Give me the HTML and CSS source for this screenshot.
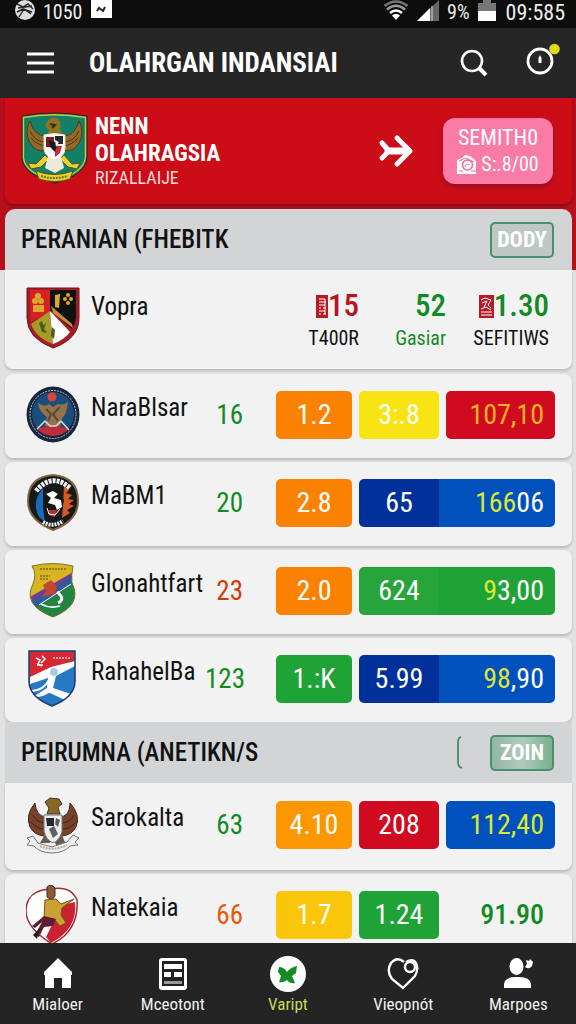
FILE: index.html
```html
<!DOCTYPE html>
<html lang="id">
<head>
<meta charset="utf-8">
<meta name="viewport" content="width=device-width, initial-scale=1">
<title>OLAHRGAN INDANSIAI</title>
<link rel="stylesheet" href="styles.css">
</head>
<body>
<div class="status">
  <svg width="20" height="21" viewBox="0 0 20 21"><circle cx="10" cy="10" r="10" fill="#ddd"/><path d="M2 4l6 3 5-3 5 5M2 12l6-3 9 3M3 8l14-2M4 17l5-8 7 5" stroke="#222" stroke-width="1.4" fill="none"/></svg>
  <span class="status-num">1050</span>
  <svg width="21" height="18" viewBox="0 0 21 18"><path d="M0 0h21v18H0z" fill="#fff"/><path d="M6 11l2-3 4 3 2-4" stroke="#222" stroke-width="2" fill="none"/></svg>
  <span class="spacer"></span>
  <svg width="26" height="21" viewBox="0 0 26 21" fill="none" stroke-width="2.6"><path d="M1.500 6Q13-3 24.500 6" stroke="#777"/><path d="M4 9.500Q13 2 22 9.500" stroke="#999"/><path d="M7 13Q13 8 19 13" stroke="#fff"/><path d="M9 15.500Q13 12 17 15.500L13 20z" fill="#fff" stroke="none"/></svg>
  <svg width="22" height="21" viewBox="0 0 22 21"><path d="M0 21L22 0v21z" fill="#666"/><path d="M0 21L13 8v13z" fill="#fff"/><path d="M15 6v15" stroke="#ddd"/></svg>
  <span class="status-num">9%</span>
  <svg class="battery" width="18" height="21" viewBox="0 0 18 21"><path d="M5 0h8v3h5v8H0V3h5z" fill="#777"/><path d="M0 11h18v10H0z" fill="#fff"/></svg>
  <span class="status-time">09:585</span>
</div>
<header class="appbar">
  <button class="icon-btn" aria-label="Menu"><svg width="27" height="22" viewBox="0 0 27 22" stroke="#fff" stroke-width="3"><path d="M0 2h27M0 11h27M0 20h27"/></svg></button>
  <h1 class="title">OLAHRGAN INDANSIAI</h1>
  <button class="icon-btn" aria-label="Cari"><svg width="28" height="28" viewBox="0 0 28 28" fill="none" stroke="#fff"><circle cx="12" cy="12" r="10" stroke-width="2.600"/><path d="M19 19l7 7" stroke-width="4"/></svg></button>
  <button class="icon-btn" aria-label="Waktu"><svg width="34" height="32" viewBox="0 0 34 32"><circle cx="14" cy="18" r="12" fill="none" stroke="#fff" stroke-width="2.800"/><path d="M12.500 20v-5l1.500-3 1.500 3v5z" fill="#fff"/><circle cx="28.500" cy="6" r="5.300" fill="#dfdc12"/></svg></button>
</header>
<main class="content">
  <section class="banner">
    <svg class="banner-crest" width="67" height="72" viewBox="0 0 67 72">
      <path d="M1 4Q33-2 66 4V45Q65 63 34 71 3 63 1 47z" fill="#128066" stroke="#222" stroke-width="1"/>
      <path d="M2.500 5.500Q33 0 64.500 5.500V45Q63 61 34 69 4 61 2.500 46z" fill="none" stroke="#d9bf36" stroke-width="1.400"/>
      <path d="M9 9Q3 20 9 31q6 10 16 7v-14Q13 24 9 9zM58 9q6 11 0 22-6 10-16 7V24Q54 24 58 9z" fill="#946928" stroke="#553b17"/>
      <path d="M9 19q5 11 16 11M10 26q6 7 15 8M58 19q-5 11-16 11M57 26q-6 7-15 8" stroke="#4b3617" fill="none"/>
      <path d="M26 10q3-6 9-4 6 2 4 11l4 9H24l4-8-4-4z" fill="#8d7525"/><path d="M29 12l5 1-3 3" fill="none" stroke="#362e14" stroke-width="2"/>
      <path d="M24 43l-9 9-8-1 3 6 10-2 8-8zM43 43l8 9 8-1-3 6-9-2-8-8z" fill="#e6d229" stroke="#54521c"/>
      <path d="M27 44h13l3 12-9 5-10-5z" fill="#ece9d7"/>
      <path d="M23 23Q33 20 44 23v13q0 9-10.500 12Q23 44 23 36z" fill="#fff" stroke="#eadfce"/>
      <path d="M25 25h8v10h-8z" fill="#821b20"/><path d="M34 24h8v8h-8z" fill="#25272a"/><path d="M25 36h8l1 8-8-4z" fill="#f7f7f7"/><path d="M34 34h7l-2 7-5 4z" fill="#c52e33"/><path d="M28 28l9 3-3 9-5-5z" fill="#171a20"/><path d="M34 28l4 2-3 5z" fill="#fff"/>
      <path d="M15 59q18 7 37 0l-3 8q-15 5-31 0z" fill="#e6d229" stroke="#54521c"/><path d="M20 64q13 4 27 0" stroke="#77701f" stroke-width="2" stroke-dasharray="2 1" fill="none"/>
    </svg>
    <div class="banner-text"><h2>NENN<br>OLAHRAGSIA</h2><p>RIZALLAIJE</p></div>
    <svg class="banner-arrow" width="36" height="34" viewBox="0 0 36 34" fill="none" stroke="#fff" stroke-linecap="round" stroke-linejoin="round"><path d="M10 17h20" stroke-width="7"/><path d="M19 4l13 13-13 13" stroke-width="5"/><path d="M4 9l7 8-7 7" stroke-width="5"/></svg>
    <button class="banner-btn"><span>SEMITH0</span><span class="btn-line"><svg width="20" height="21" viewBox="0 0 20 21"><path d="M0 20V6l5-2 3-3 5 1 6 5v13z" fill="#fff"/><circle cx="10.500" cy="11" r="5" fill="none" stroke="#ee6d99" stroke-width="1.600"/><path d="M2 7l7-3 8 4M8 13q1-5 5-2M2 17h4M14 17h5" stroke="#ee6d99" fill="none"/></svg>S:.8/00</span></button>
  </section>

  <section class="group">
    <div class="group-head"><h2>PERANIAN (FHEBITK</h2><button class="tag">DODY</button></div>
    <table class="list"><tbody>
      <tr class="row summary">
        <td class="crest"><svg width="54" height="62" viewBox="0 0 54 62"><path d="M1 1h52v30Q53 52 27 61 1 51 1 31z" fill="#a71c25" stroke="#6d1920"/><path d="M4 3h20v22L5 35z" fill="#d81f24"/><path d="M24 3h26v28q-1 6-4 11L24 23z" fill="#111"/><path d="M24 24L5 37q5 14 22 20z" fill="#a49c25"/><path d="M24 24l20 21q-6 8-17 12z" fill="#fff"/><path d="M25 19l21 18 1 4-20-15z" fill="#c78d3c"/><g fill="#d9a92b"><circle cx="12" cy="9" r="3"/><circle cx="9" cy="14" r="3"/><circle cx="15" cy="14" r="3"/><path d="M7 18h11v7H7z"/><circle cx="42" cy="8" r="2"/><circle cx="39" cy="12" r="2"/><circle cx="45" cy="12" r="2"/><circle cx="42" cy="16" r="2"/><path d="M29 8l5-1-1 14-4-1z"/></g><path d="M13 36l3-2 1 4 3-2-2 6 3 4-5-1zM26 40l3 3-1 9-3-3z" fill="#4f5a22"/></svg></td>
        <td class="name">Vopra</td>
        <td class="stat"><strong class="red"><svg width="12" height="23" viewBox="0 0 12 23"><path d="M0 0h12v23H0z" fill="#b71b25"/><path d="M3 4h6M3 7h7M3 10h6M3 13h2M7 13h3M3 16h6M3 19h2M7 19h3M9 4v15" stroke="#fff" fill="none"/></svg>15</strong><span>T400R</span></td>
        <td class="stat"><strong class="green">52</strong><span class="green">Gasiar</span></td>
        <td class="stat"><strong class="green"><svg width="15" height="23" viewBox="0 0 15 23"><path d="M0 0h15v23H0z" fill="#b71b25"/><path d="M2 5l4-2 6 2-3 5 3 3M3 8l5-2-3 6M2 14l5-2 5 3M2 17h11M2 20h11" stroke="#fff" fill="none"/></svg>1.30</strong><span>SEFITIWS</span></td>
      </tr>
      <tr class="row">
        <td class="crest"><svg width="54" height="57" viewBox="0 0 54 57"><ellipse cx="27" cy="28.500" rx="26.500" ry="28" fill="#17273b"/><ellipse cx="27" cy="28.500" rx="23" ry="24" fill="none" stroke="#bac2ca" stroke-dasharray="2 1"/><ellipse cx="27" cy="28" rx="21" ry="22" fill="#1a4c7d"/><circle cx="26" cy="11" r="4.500" fill="#d5453c"/><path d="M12 17q7 5 11 1l4 3 5-3q7 2 10-3-1 14-6 17l-2 8h-15l2-9q-8-5-9-14z" fill="#94734a"/><path d="M20 23l5 5-3 7M34 21l-7 7 5 7" stroke="#5a4632" fill="none" stroke-width="2"/><path d="M11 43q16-7 32 0-7 7-16 7t-16-7z" fill="#be2c3d"/><path d="M11 43l8-8 5 5h6l5-5 8 9" fill="none" stroke="#ddd" stroke-width="1.500"/></svg></td>
        <td class="name">NaraBlsar</td><td class="count green">16</td>
        <td class="pill orange">1.2</td><td class="pill yellow">3:.8</td><td class="pill total crimson amber-text">107,10</td>
      </tr>
      <tr class="row">
        <td class="crest"><svg width="54" height="57" viewBox="0 0 54 57"><path d="M27 1q25 2 25 26 0 20-25 29Q2 46 2 27 2 3 27 1z" fill="#171a1c" stroke="#80643c" stroke-width="2"/><path d="M17 14Q5 28 13 43l6 5-2-14z" fill="#176bb9"/><path d="M38 12l5 4-3 3 6 2-4 4 6 1-5 4 5 2-7 4 3 3-8 5 1-12z" fill="#d65a20"/><path d="M10 17q16-19 34-3" fill="none" stroke="#eee" stroke-width="5" stroke-dasharray="3 1"/><path d="M18 22l5-6 9 1 6 9-2 10-6 7-9-1-4-9z" fill="#151515"/><path d="M20 20l7-3 5 3-4 4 7 2 1 7-5 3-2-5-7-2 3-5z" fill="#fff"/><path d="M22 36h9l-2 7-5-1z" fill="#b92e32"/><path d="M21 34l2 6 6 1 5-6" stroke="#fff" fill="none"/><path d="M17 48q10 6 20-1" stroke="#eee" stroke-width="4" stroke-dasharray="2 1" fill="none"/></svg></td>
        <td class="name">MaBM1</td><td class="count green">20</td>
        <td class="pill orange">2.8</td><td class="pill navy join-left">65</td><td class="pill total blue join-right"><span class="lime-text">166</span>06</td>
      </tr>
      <tr class="row">
        <td class="crest"><svg width="54" height="57" viewBox="0 0 54 57"><defs><clipPath id="shield-c"><path d="M6 4q21-5 41 0-2 10-1 17 11 22-19 34Q-4 43 7 22 11 12 6 4z"/></clipPath></defs><g clip-path="url(#shield-c)"><path d="M0 0h54v57H0z" fill="#d7b421"/><path d="M4 35L49 9v15L13 48z" fill="#713d91"/><path d="M4 40L49 12v8L10 46z" fill="#315a9c"/><path d="M10 46L49 20v37H15z" fill="#218541"/><path d="M13 43l32-21" stroke="#fff"/><path d="M17 23l8-5 6 6-2 8-13 3 4-6z" fill="#c64534"/><path d="M31 30q9 7 1 11" fill="none" stroke="#fff" stroke-width="3"/><path d="M15 42q9 5 19 2" fill="none" stroke="#fff" stroke-width="1.500"/><path d="M14 7h26M14 14h10M14 17h9" stroke="#99791e" stroke-width="2" stroke-dasharray="2 1"/></g><path d="M6 4q21-5 41 0-2 10-1 17 11 22-19 34Q-4 43 7 22 11 12 6 4z" fill="none" stroke="#7b722a"/></svg></td>
        <td class="name">Glonahtfart</td><td class="count rust">23</td>
        <td class="pill orange">2.0</td><td class="pill leaf join-left">624</td><td class="pill total leaf-dark join-right"><span class="lime-text">9</span>3,00</td>
      </tr>
      <tr class="row">
        <td class="crest"><svg width="54" height="57" viewBox="0 0 54 57"><path d="M3 1h46v30q0 16-23 25Q3 47 3 31z" fill="#2778c5"/><path d="M4 2h44v9L4 31z" fill="#d52832"/><path d="M4 27L25 17l24-6v5L30 26l-3 12 18 6-6 6-15-7-14 2 11-7 1-10L4 34z" fill="#fff"/><circle cx="28" cy="22" r="4" fill="#a9cde6"/><path d="M6 41q12-1 17-11M9 46q9 0 14-5" stroke="#fff" stroke-width="2" fill="none"/><path d="M10 8l4 2-2 4 4 2M16 6l3 3-4 4M11 15h6" stroke="#fff" stroke-width="1.500" fill="none"/><path d="M27 8h17" stroke="#e8a1a5" stroke-width="2" stroke-dasharray="2 1"/><path d="M3 1h46v30q0 16-23 25Q3 47 3 31z" fill="none" stroke="#203a6a" stroke-width="1.500"/></svg></td>
        <td class="name">RahahelBa</td><td class="count green">123</td>
        <td class="pill leaf-dark">1.:K</td><td class="pill navy join-left">5.99</td><td class="pill total blue join-right"><span class="lime-text">98</span>,90</td>
      </tr>
    </tbody></table>
  </section>

  <section class="group">
    <div class="group-head second"><h2>PEIRUMNA (ANETIKN/S</h2><svg width="6" height="33" viewBox="0 0 6 33"><path d="M4 1Q1 2 1 6v20q0 5 4 6" fill="none" stroke="#39805c" stroke-width="1.600"/></svg><button class="tag filled">ZOIN</button></div>
    <table class="list"><tbody>
      <tr class="row">
        <td class="crest"><svg width="54" height="57" viewBox="0 0 54 57"><path d="M9 6Q-1 18 4 30q4 8 14 9l3-19Q10 20 9 6zM44 6q11 12 6 24-4 8-14 9l-3-19Q44 20 44 6z" fill="#774229" stroke="#3d2b22"/><path d="M7 18q4 8 12 8M5 25q6 7 13 7M48 18q-4 8-12 8M50 25q-6 7-13 7" fill="none" stroke="#38271f"/><path d="M19 5l5-4 9 1 3 5-4 3 2 7H21l2-6z" fill="#8b6727" stroke="#443824"/><path d="M18 39l-4 7h10l3-6 3 8h10l-4-10z" fill="#685a50"/><path d="M18 18h18v17q-3 9-9 11-7-3-9-12z" fill="#ededed" stroke="#71767b"/><path d="M20 21h8v8h-7z" fill="#272a2d"/><path d="M30 21l4 2-2 7-3-3zM23 32l5-3 4 8-5 4z" fill="#596066"/><path d="M1 41l6-2 5 7 14 4 15-5 6-7 6 3-4 4 3 3-8 1q-6 7-18 7t-18-7l-7-1 3-4z" fill="#eee" stroke="#777"/><path d="M14 49q12 6 27-1" fill="none" stroke="#aaa" stroke-width="2" stroke-dasharray="2 1"/></svg></td>
        <td class="name">Sarokalta</td><td class="count green">63</td>
        <td class="pill tangerine">4.10</td><td class="pill crimson">208</td><td class="pill total blue lime-text">112,40</td>
      </tr>
      <tr class="row">
        <td class="crest"><svg width="54" height="60" viewBox="0 0 54 60"><path d="M24 4Q45 0 51 15q2 31-25 44Q-9 37 3 14 8 5 24 4z" fill="#fff" stroke="#9d2e35" stroke-width="1.500"/><path d="M49 17q3 27-24 41l-5-6 16-32z" fill="#cb2230"/><path d="M21 2q4-4 8 1v8l-3 4-5-3z" fill="#8b5b35" stroke="#422c20"/><path d="M19 15l11-1 5 5 13-5-12 9-1 7 5 8-6 3-6-7-10-1z" fill="#caa132" stroke="#74501d"/><path d="M18 31l12 3-3 7-9 1-5 10-4-2 7-13-7 6-3-2z" fill="#611e31"/><path d="M14 43l-3 11-4-4" fill="#2b1720"/></svg></td>
        <td class="name">Natekaia</td><td class="count orange-text">66</td>
        <td class="pill gold">1.7</td><td class="pill leaf-dark">1.24</td><td class="pill total plain">91.90</td>
      </tr>
    </tbody></table>
  </section>
</main>
<nav class="tabs">
  <a href="#home"><svg width="36" height="36" viewBox="0 0 36 36"><path d="M18 2L4 16v3h1v13h9V22h8v10h9V19h1v-3z" fill="#fff"/></svg>Mialoer</a>
  <a href="#news"><svg width="36" height="36" viewBox="0 0 36 36"><rect x="4" y="2" width="28" height="32" rx="3" fill="#fff"/><path d="M7 5h22v25H7z" fill="#222"/><path d="M9 8h18v5H9zM9 16h7v5H9zM19 16h8v5h-8z" fill="#fff"/><path d="M9 25h18v3H9z" fill="#999"/></svg>Mceotont</a>
  <a href="#match" class="active"><svg width="36" height="36" viewBox="0 0 36 36"><circle cx="18" cy="18" r="18" fill="#fff"/><path d="M9 11q5 0 8 5 4-5 10-6l-1 7-4 3 3 7q-5 1-8-3-4 3-8 2l2-6-3-4z" fill="#168b24"/></svg>Vaript</a>
  <a href="#fav"><svg width="36" height="36" viewBox="0 0 36 36" fill="none" stroke="#fff" stroke-width="2.400"><path d="M19 6Q12 0 6 7q-5 8 1 16l11 9 12-12q4-7 1-13Q28 2 21 6"/><circle cx="25" cy="11" r="5"/></svg>Vieopnót</a>
  <a href="#profile"><svg width="36" height="36" viewBox="0 0 36 36" fill="#fff"><ellipse cx="16.500" cy="10.500" rx="7" ry="8.500"/><path d="M4 32v-4q1-7 12-7h3q11 0 12 7v4z"/><path d="M26 4l3 1 1-2 3 3-1 4q-3 4-7 1l2-3z"/></svg>Marpoes</a>
</nav>
</body>
</html>
```
FILE: styles.css
```css
* { box-sizing: border-box; }
body {
  margin: 0;
  height: 100vh;
  display: flex;
  flex-direction: column;
  font-family: "Roboto Condensed", "Liberation Sans Narrow", Roboto, sans-serif;
  color: #111;
  background: #e5e5e5;
}
h1, h2, p { margin: 0; }
button { font-family: inherit; cursor: pointer; }
svg { display: block; flex: none; }

.status {
  flex: none;
  display: flex;
  align-items: flex-start;
  gap: 8px;
  height: 28px;
  padding: 0 11px 0 15px;
  background: #0d0d0d;
  color: #eee;
}
.status-num { font-size: 20px; line-height: 24px; }
.status-time { font-size: 22px; line-height: 26px; margin-left: 2px; }
.spacer { flex: 1; }
.appbar {
  flex: none;
  display: flex;
  align-items: center;
  height: 70px;
  padding: 0 16px 0 27px;
  background: #262626;
}
.title {
  flex: 1;
  padding-left: 35px;
  font-size: 27px;
  font-weight: 700;
  line-height: 36px;
  color: #fff;
  white-space: nowrap;
}
.icon-btn { padding: 0; border: 0; background: none; }
.icon-btn + .icon-btn { margin: 0 0 8px 38px; }

.content {
  flex: 1;
  min-height: 0;
  overflow: hidden;
  padding: 0 4px 0 5px;
  background: linear-gradient(#b80f1b 172px, #e2e2e2 172px);
}
.banner {
  display: flex;
  align-items: center;
  height: 106px;
  margin-bottom: 5px;
  padding: 0 19px 0 16px;
  border-radius: 0 0 8px 8px;
  background: #cc0d18;
  box-shadow: 0 2px 3px #7c1018;
  color: #fff;
}
.banner-crest { margin-bottom: 6px; }
.banner-text { flex: 1; padding-left: 7px; }
.banner-text h2 { font-size: 23px; line-height: 27px; }
.banner-text p { font-size: 18px; line-height: 22px; color: #ffdcdc; }
.banner-arrow { margin-right: 29px; }
.banner-btn {
  display: flex;
  flex-direction: column;
  align-items: center;
  justify-content: center;
  width: 110px;
  height: 66px;
  padding: 0;
  border: 0;
  border-radius: 12px;
  background: #f97ba6;
  box-shadow: 0 3px 5px #960e24;
  color: #fff;
  font-size: 22px;
  line-height: 26px;
}
.btn-line { display: flex; align-items: center; gap: 4px; font-size: 20px; }

.group-head {
  display: flex;
  align-items: center;
  height: 61px;
  padding: 0 18px 0 16px;
  border-radius: 10px 10px 0 0;
  background: #d3d4d5;
}
.group-head.second { border-radius: 0; }
.group-head h2 { flex: 1; font-size: 25px; font-weight: 500; line-height: 32px; white-space: nowrap; }
.tag {
  width: 64px;
  height: 36px;
  margin-left: 27px;
  padding: 0;
  border: 2px solid #4c8e72;
  border-radius: 5px;
  background: #bfc8c5;
  color: #fff;
  font-size: 22px;
  font-weight: 700;
  line-height: 30px;
}
.tag.filled { background: linear-gradient(90deg, #93b5a3, #b0cbbb, #79b18e); }

.list, .list tbody { display: block; }
.row {
  display: grid;
  grid-template-columns: 53px minmax(0, 1fr) 64px 76px 80px 109px;
  align-items: center;
  gap: 7px;
  min-height: 84px;
  margin-bottom: 4px;
  padding: 0 17px 3px 21px;
  border-radius: 8px;
  background: #f2f2f2;
  box-shadow: 0 2px 3px #b9b9b9;
}
.row:first-child { min-height: 87px; border-radius: 0 0 8px 8px; }
.row:last-child { margin-bottom: 0; }
.row.summary {
  grid-template-columns: 53px minmax(0, 1fr) 84px 80px 96px;
  min-height: 99px;
  margin-bottom: 5px;
  padding-right: 23px;
}
td { padding: 0; }
.name { padding: 0 0 14px 5px; font-size: 25px; line-height: 32px; white-space: nowrap; }
.summary .name { padding-bottom: 22px; }
.count { padding-right: 26px; font-size: 27px; line-height: 32px; text-align: right; }
.stat { padding-top: 6px; text-align: right; }
.stat strong { display: flex; align-items: center; justify-content: flex-end; font-size: 31px; font-weight: 500; line-height: 34px; }
.stat span { display: block; font-size: 20px; line-height: 30px; }

.pill {
  height: 48px;
  border-radius: 5px;
  color: #fff;
  font-size: 28px;
  line-height: 48px;
  text-align: center;
  white-space: nowrap;
}
.pill.total { padding-right: 11px; text-align: right; }
.join-left { border-radius: 5px 0 0 5px; }
.join-right { margin-left: -7px; border-radius: 0 5px 5px 0; }
.orange { background: #fb8200; }
.tangerine { background: #fd9700; }
.gold { background: #f9c60a; }
.yellow { background: #f7e412; }
.crimson { background: #d00b20; }
.navy { background: #00319b; }
.blue { background: #0050bd; }
.leaf { background: #27a53a; }
.leaf-dark { background: #20a336; }
.red { color: #b8141f; }
.green { color: #128a24; }
.rust { color: #cf3c0b; }
.orange-text { color: #e8590c; }
.pill.amber-text { color: #ffb321; }
.lime-text, .pill.lime-text { color: #d9e832; }
.pill.plain { color: #128a24; font-weight: 500; }

.tabs {
  flex: none;
  display: grid;
  grid-template-columns: repeat(5, 1fr);
  height: 81px;
  background: #242424;
}
.tabs a {
  display: flex;
  flex-direction: column;
  align-items: center;
  gap: 1px;
  padding-top: 13px;
  color: #f0f0f0;
  font-size: 17px;
  line-height: 22px;
  text-decoration: none;
}
.tabs .active { color: #c3dc55; }
```
